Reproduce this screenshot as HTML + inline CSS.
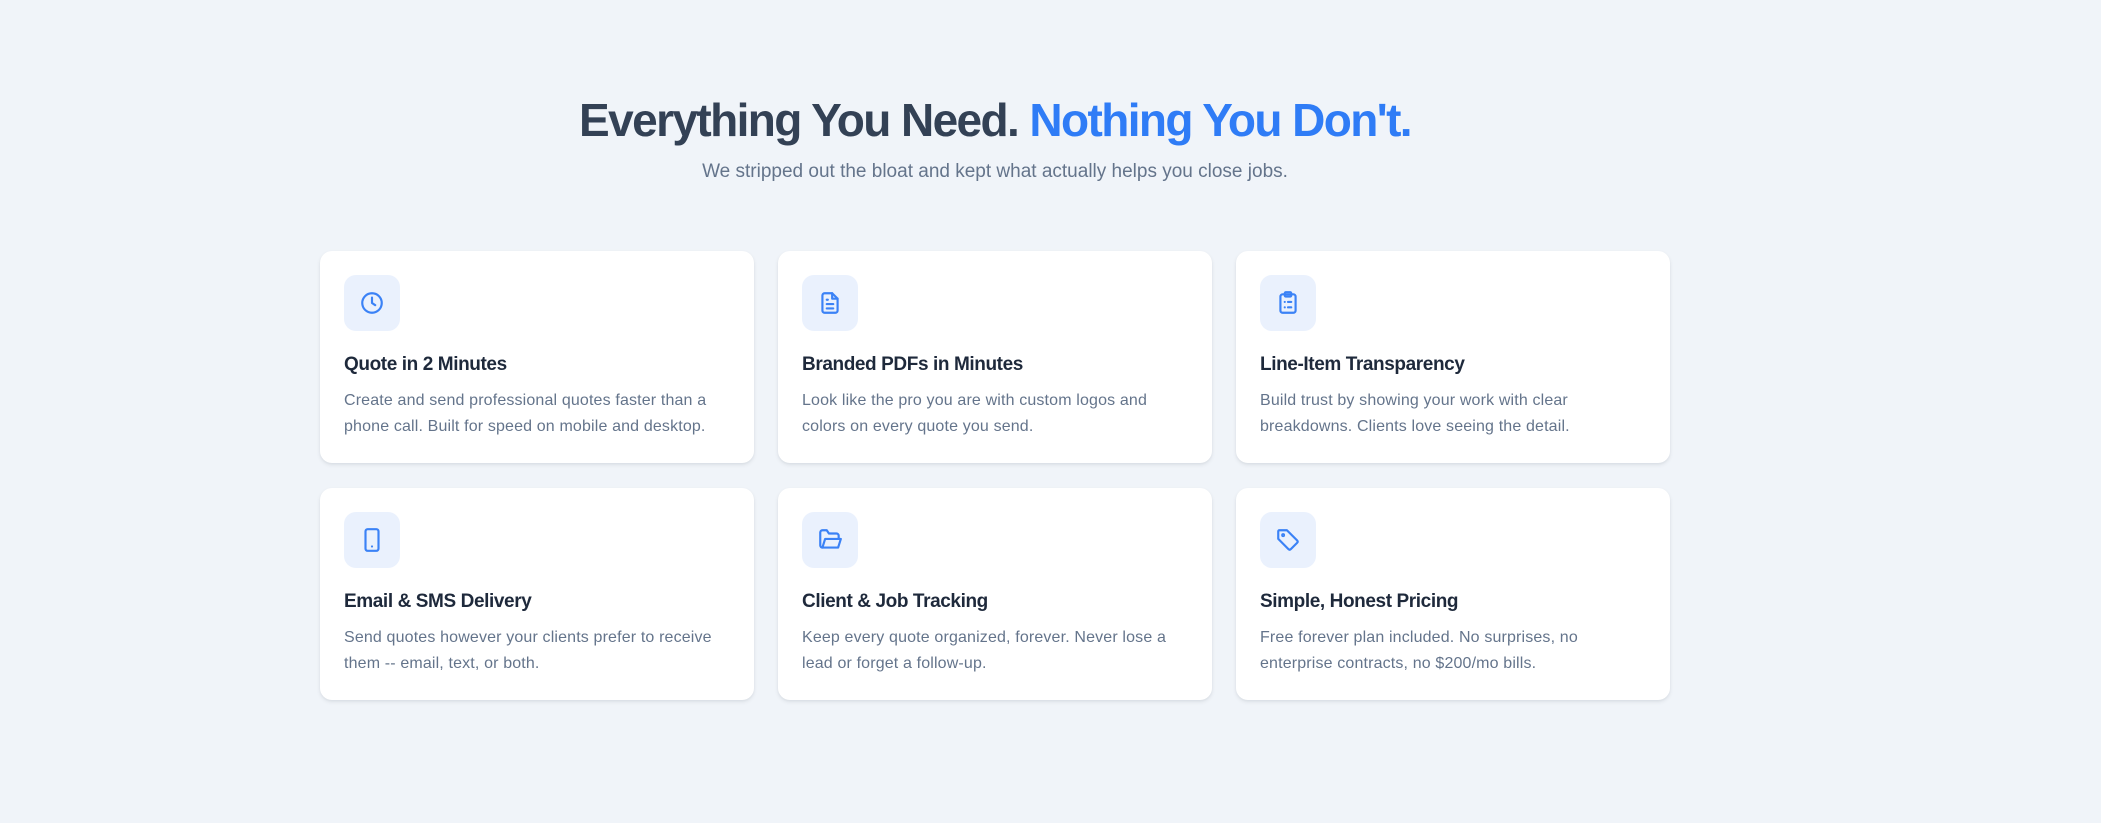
<!DOCTYPE html>
<html><head><meta charset="utf-8"><style>
*{box-sizing:border-box;margin:0;padding:0}
body{width:2101px;height:823px;background:#f0f4f9;font-family:"Liberation Sans",sans-serif;position:relative;overflow:hidden}
h1{position:absolute;top:90px;left:0;width:1990px;text-align:center;font-size:46px;font-weight:700;color:#334155;letter-spacing:-1.6px;line-height:60px}
h1 span{color:#2f7cf6}
.sub{position:absolute;top:160px;left:0;width:1990px;text-align:center;font-size:19px;color:#64748b;line-height:24px}
.card{position:absolute;width:434px;height:212px;background:#fff;border-radius:12px;box-shadow:0 2px 4px rgba(15,23,42,.08),0 1px 2px rgba(15,23,42,.04);padding:24px}
.ic{width:56px;height:56px;border-radius:12px;background:#eaf1fd;display:flex;align-items:center;justify-content:center}
.ic svg{width:26px;height:26px;fill:none;stroke:#3b82f6;stroke-width:2;stroke-linecap:round;stroke-linejoin:round}
.t{margin-top:22px;font-size:19px;font-weight:700;color:#1e293b;letter-spacing:-.4px;line-height:24px}
.d{margin-top:11px;font-size:16px;color:#64748b;line-height:26px;letter-spacing:.15px}
</style></head><body>
<h1>Everything You Need. <span>Nothing You Don't.</span></h1>
<div class="sub">We stripped out the bloat and kept what actually helps you close jobs.</div>

<div class="card" style="left:320px;top:251px"><div class="ic"><svg viewBox="0 0 24 24"><circle cx="12" cy="12" r="9"/><path d="M12 7v5l3 2"/></svg></div><div class="t">Quote in 2 Minutes</div><div class="d">Create and send professional quotes faster than a<br>phone call. Built for speed on mobile and desktop.</div></div>
<div class="card" style="left:778px;top:251px"><div class="ic"><svg viewBox="0 0 24 24"><path d="M14 3H7a2 2 0 0 0-2 2v14a2 2 0 0 0 2 2h10a2 2 0 0 0 2-2V8z"/><path d="M14 3v5h5M9 9h1M9 13h6M9 17h6"/></svg></div><div class="t">Branded PDFs in Minutes</div><div class="d">Look like the pro you are with custom logos and<br>colors on every quote you send.</div></div>
<div class="card" style="left:1236px;top:251px"><div class="ic"><svg viewBox="0 0 24 24"><rect x="5" y="4" width="14" height="17" rx="2"/><rect x="9" y="2" width="6" height="4" rx="1"/><path d="M9 11h.01M12 11h3M9 16h.01M12 16h3"/></svg></div><div class="t">Line-Item Transparency</div><div class="d">Build trust by showing your work with clear<br>breakdowns. Clients love seeing the detail.</div></div>

<div class="card" style="left:320px;top:488px"><div class="ic"><svg viewBox="0 0 24 24"><rect x="6" y="2" width="12" height="20" rx="2"/><path d="M12 18h.01"/></svg></div><div class="t">Email &amp; SMS Delivery</div><div class="d">Send quotes however your clients prefer to receive<br>them -- email, text, or both.</div></div>
<div class="card" style="left:778px;top:488px"><div class="ic"><svg viewBox="0 0 24 24"><path d="M5 19a2 2 0 0 1-2-2V5a2 2 0 0 1 2-2h4l2 3h7a2 2 0 0 1 2 2v2"/><path d="M5 19l2.5-8H22l-2.5 8z"/></svg></div><div class="t">Client &amp; Job Tracking</div><div class="d">Keep every quote organized, forever. Never lose a<br>lead or forget a follow-up.</div></div>
<div class="card" style="left:1236px;top:488px"><div class="ic"><svg viewBox="0 0 24 24"><path d="M3 4v7l9.5 9.5a1.5 1.5 0 0 0 2 0l6-6a1.5 1.5 0 0 0 0-2L11 3H4a1 1 0 0 0-1 1z"/><circle cx="7.5" cy="7.5" r=".8"/></svg></div><div class="t">Simple, Honest Pricing</div><div class="d">Free forever plan included. No surprises, no<br>enterprise contracts, no $200/mo bills.</div></div>
</body></html>
